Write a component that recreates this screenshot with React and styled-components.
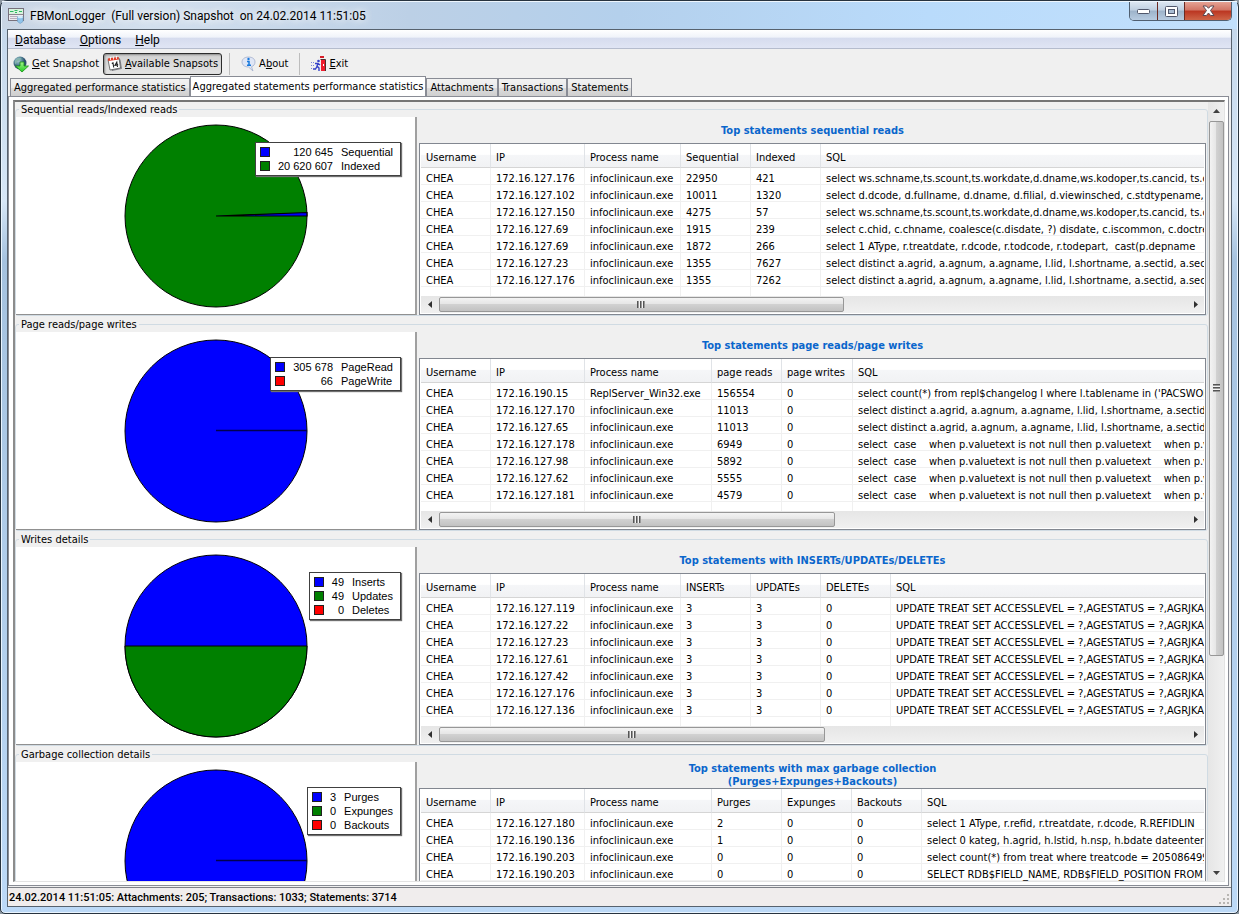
import styled, { createGlobalStyle } from "styled-components";

const groups = [
  {
    legend: "Sequential reads/Indexed reads",
    title: ["Top statements sequential reads"],
    slices: [
      { label: "Sequential", value: "120 645", color: "#0000ff" },
      { label: "Indexed", value: "20 620 607", color: "#008000" },
    ],
    pie: "sequential",
    widths: [70, 94, 96, 70, 70],
    thumb: 406 / 749,
    columns: ["Username", "IP", "Process name", "Sequential", "Indexed", "SQL"],
    rows: [
      ["CHEA", "172.16.127.176", "infoclinicaun.exe", "22950", "421", "select ws.schname,ts.scount,ts.workdate,d.dname,ws.kodoper,ts.cancid, ts.c"],
      ["CHEA", "172.16.127.102", "infoclinicaun.exe", "10011", "1320", "select d.dcode, d.fullname, d.dname, d.filial, d.viewinsched, c.stdtypename, d"],
      ["CHEA", "172.16.127.150", "infoclinicaun.exe", "4275", "57", "select ws.schname,ts.scount,ts.workdate,d.dname,ws.kodoper,ts.cancid, ts.c"],
      ["CHEA", "172.16.127.69", "infoclinicaun.exe", "1915", "239", "select c.chid, c.chname, coalesce(c.disdate, ?) disdate, c.iscommon, c.doctreq"],
      ["CHEA", "172.16.127.69", "infoclinicaun.exe", "1872", "266", "select 1 AType, r.treatdate, r.dcode, r.todcode, r.todepart,  cast(p.depname"],
      ["CHEA", "172.16.127.23", "infoclinicaun.exe", "1355", "7627", "select distinct a.agrid, a.agnum, a.agname, l.lid, l.shortname, a.sectid, a.secti"],
      ["CHEA", "172.16.127.176", "infoclinicaun.exe", "1355", "7262", "select distinct a.agrid, a.agnum, a.agname, l.lid, l.shortname, a.sectid, a.secti"],
    ],
  },
  {
    legend: "Page reads/page writes",
    title: ["Top statements page reads/page writes"],
    slices: [
      { label: "PageRead", value: "305 678", color: "#0000ff" },
      { label: "PageWrite", value: "66", color: "#ff0000" },
    ],
    pie: "full",
    widths: [70, 94, 127, 70, 71],
    thumb: 397 / 749,
    columns: ["Username", "IP", "Process name", "page reads", "page writes", "SQL"],
    rows: [
      ["CHEA", "172.16.190.15", "ReplServer_Win32.exe", "156554", "0", "select count(*) from repl$changelog l where l.tablename in ('PACSWORK"],
      ["CHEA", "172.16.127.170", "infoclinicaun.exe", "11013", "0", "select distinct a.agrid, a.agnum, a.agname, l.lid, l.shortname, a.sectid,"],
      ["CHEA", "172.16.127.65", "infoclinicaun.exe", "11013", "0", "select distinct a.agrid, a.agnum, a.agname, l.lid, l.shortname, a.sectid,"],
      ["CHEA", "172.16.127.178", "infoclinicaun.exe", "6949", "0", "select  case    when p.valuetext is not null then p.valuetext    when p.va"],
      ["CHEA", "172.16.127.98", "infoclinicaun.exe", "5892", "0", "select  case    when p.valuetext is not null then p.valuetext    when p.va"],
      ["CHEA", "172.16.127.62", "infoclinicaun.exe", "5555", "0", "select  case    when p.valuetext is not null then p.valuetext    when p.va"],
      ["CHEA", "172.16.127.181", "infoclinicaun.exe", "4579", "0", "select  case    when p.valuetext is not null then p.valuetext    when p.va"],
    ],
  },
  {
    legend: "Writes details",
    title: ["Top statements with INSERTs/UPDATEs/DELETEs"],
    slices: [
      { label: "Inserts", value: "49", color: "#0000ff" },
      { label: "Updates", value: "49", color: "#008000" },
      { label: "Deletes", value: "0", color: "#ff0000" },
    ],
    pie: "half",
    widths: [70, 94, 96, 70, 70, 70],
    thumb: 387 / 749,
    columns: ["Username", "IP", "Process name", "INSERTs", "UPDATEs", "DELETEs", "SQL"],
    rows: ["119", "22", "23", "61", "42", "176", "136"].map((host) => [
      "CHEA", `172.16.127.${host}`, "infoclinicaun.exe", "3", "3", "0",
      "UPDATE TREAT SET ACCESSLEVEL = ?,AGESTATUS = ?,AGRJKA",
    ]),
  },
  {
    legend: "Garbage collection details",
    title: ["Top statements with max garbage collection", "(Purges+Expunges+Backouts)"],
    slices: [
      { label: "Purges", value: "3", color: "#0000ff" },
      { label: "Expunges", value: "0", color: "#008000" },
      { label: "Backouts", value: "0", color: "#ff0000" },
    ],
    pie: "full",
    widths: [70, 94, 127, 70, 70, 70],
    thumb: 377 / 749,
    columns: ["Username", "IP", "Process name", "Purges", "Expunges", "Backouts", "SQL"],
    rows: [
      ["CHEA", "172.16.127.180", "infoclinicaun.exe", "2", "0", "0", "select 1 AType, r.refid, r.treatdate, r.dcode, R.REFIDLIN"],
      ["CHEA", "172.16.190.136", "infoclinicaun.exe", "1", "0", "0", "select 0 kateg, h.agrid, h.lstid, h.nsp, h.bdate dateenter,"],
      ["CHEA", "172.16.190.203", "infoclinicaun.exe", "0", "0", "0", "select count(*) from treat where treatcode = 2050864996"],
      ["CHEA", "172.16.190.203", "infoclinicaun.exe", "0", "0", "0", "SELECT RDB$FIELD_NAME, RDB$FIELD_POSITION FROM"],
    ],
  },
];

const App = () => {
  return (
    <>
      <GlobalStyle />
      <Window>
        <TitleBar>
          <AppIcon />
          <Title>FBMonLogger&nbsp; (Full version) Snapshot&nbsp; on 24.02.2014 11:51:05</Title>
          <Controls>
            <ControlButton aria-label="Minimize">
              <svg width="13" height="7" viewBox="0 0 13 7">
                <rect x="0.5" y="1.5" width="12" height="4" rx="1" fill="#fff" stroke="#50576b" />
              </svg>
            </ControlButton>
            <ControlButton aria-label="Maximize">
              <svg width="13" height="11" viewBox="0 0 13 11">
                <rect x="0.5" y="0.5" width="12" height="10" rx="1" fill="#fff" stroke="#50576b" />
                <rect x="3.5" y="3.5" width="6" height="4" fill="#a9bdd4" stroke="#50576b" />
              </svg>
            </ControlButton>
            <ControlButton aria-label="Close" $close>
              <svg width="13" height="12" viewBox="0 0 13 12">
                <path
                  d="M1 1h3.4l2.1 2.3L8.600 1H12L8.500 5.500 12 10.500H8.600L6.500 8 4.400 10.500H1l3.500-5z"
                  fill="#fff"
                  stroke="#5b4852"
                />
              </svg>
            </ControlButton>
          </Controls>
        </TitleBar>
        <Client>
          <MenuBar>
            <MenuItem><u>D</u>atabase</MenuItem>
            <MenuItem><u>O</u>ptions</MenuItem>
            <MenuItem><u>H</u>elp</MenuItem>
          </MenuBar>
          <Toolbar>
            <ToolButton><SnapshotIcon /><span><u>G</u>et Snapshot</span></ToolButton>
            <ToolButton $pressed><CalendarIcon /><span><u>A</u>vailable Snapsots</span></ToolButton>
            <Separator />
            <ToolButton><AboutIcon /><span>A<u>b</u>out</span></ToolButton>
            <Separator />
            <ToolButton><ExitIcon /><span><u>E</u>xit</span></ToolButton>
          </Toolbar>
          <TabStrip role="tablist">
            <Tab role="tab">Aggregated performance statistics</Tab>
            <Tab role="tab" aria-selected="true" $active>Aggregated statements performance statistics</Tab>
            <Tab role="tab">Attachments</Tab>
            <Tab role="tab">Transactions</Tab>
            <Tab role="tab">Statements</Tab>
          </TabStrip>
          <TabPanel>
            <ScrollBox>
              <Groups>
                {groups.map((group) => <StatGroup key={group.legend} group={group} />)}
              </Groups>
              <VScroll>
                <ArrowBox><Arrow viewBox="0 0 7 4"><path d="M0 4 3.500 0 7 4z" /></Arrow></ArrowBox>
                <VTrack>
                  <VThumb><Grip /></VThumb>
                </VTrack>
                <ArrowBox><Arrow viewBox="0 0 7 4"><path d="M0 0h7L3.500 4z" /></Arrow></ArrowBox>
              </VScroll>
            </ScrollBox>
          </TabPanel>
          <StatusBar>
            <span>24.02.2014 11:51:05: Attachments: 205; Transactions: 1033; Statements: 3714</span>
            <SizeGrip />
          </StatusBar>
        </Client>
      </Window>
    </>
  );
};

const StatGroup = ({ group }) => {
  return (
    <GroupBox>
      <GroupLegend>{group.legend}</GroupLegend>
      <GroupBody>
        <ChartPanel>
          <Pie kind={group.pie} />
          <ChartLegend>
            {group.slices.map((slice) => (
              <LegendRow key={slice.label}>
                <Swatch $color={slice.color} />
                <LegendValue>{slice.value}</LegendValue>
                <LegendLabel>{slice.label}</LegendLabel>
              </LegendRow>
            ))}
          </ChartLegend>
        </ChartPanel>
        <ListPanel>
          <ListTitle>
            {group.title.map((line) => <span key={line}>{line}</span>)}
          </ListTitle>
          <ListBox>
            <TableClip>
              <Table>
                <colgroup>
                  {group.widths.map((width, i) => <col key={i} style={{ width }} />)}
                  <col />
                </colgroup>
                <thead>
                  <tr>{group.columns.map((name) => <HeadCell key={name}>{name}</HeadCell>)}</tr>
                </thead>
                <tbody>
                  {group.rows.map((row, r) => (
                    <tr key={r}>{row.map((text, c) => <Cell key={c}>{text}</Cell>)}</tr>
                  ))}
                  <tr>{group.columns.map((name) => <Cell key={name} />)}</tr>
                </tbody>
              </Table>
            </TableClip>
            <HScroll>
              <ArrowBox><SideArrow viewBox="0 0 4 7"><path d="M4 0v7L0 3.500z" /></SideArrow></ArrowBox>
              <HTrack>
                <HThumb style={{ width: `${group.thumb * 100}%` }}><Grip $upright /></HThumb>
              </HTrack>
              <ArrowBox><SideArrow viewBox="0 0 4 7"><path d="M0 0l4 3.500L0 7z" /></SideArrow></ArrowBox>
            </HScroll>
          </ListBox>
        </ListPanel>
      </GroupBody>
    </GroupBox>
  );
};

const Pie = ({ kind }) => (
  <svg width="184" height="184" viewBox="0 0 184 184">
    <circle cx="92" cy="92" r="91" fill={kind === "sequential" ? "#008000" : "#0000ff"} stroke="#000" />
    {kind === "sequential" && (
      <path d="M92 92 183 88.500V92z" fill="#0000ff" stroke="#000" strokeWidth="1.2" />
    )}
    {kind === "half" && <path d="M1 92a91 91 0 0 0 182 0z" fill="#008000" stroke="#000" />}
    {kind === "full" && <path d="M92 91.500h91" stroke="#000050" strokeWidth="1.500" />}
  </svg>
);

const AppIcon = () => (
  <svg width="16" height="16" viewBox="0 0 16 16">
    <rect x="0.5" y="0.5" width="15" height="12" fill="#ecebf0" stroke="#77717c" />
    <rect x="1" y="1" width="14" height="5" fill="#d9f3de" />
    <path d="M2 3.500h3.500M6.500 2.500h3M7 4.500h2M11 3.500h3" stroke="#2fba62" />
    <path d="M1 6.500h14" stroke="#8c8590" />
    <path d="M2 8.500h7M2 10.500h7" stroke="#b9aebb" />
    <path d="M9.500 8.500h5.500v5l-2.800 2-2.700-2z" fill="#8fc3ea" stroke="#6a98c0" strokeWidth="0.6" />
    <ellipse cx="12.300" cy="9" rx="2.700" ry="1.200" fill="#d3ebfa" />
  </svg>
);

const SnapshotIcon = () => (
  <svg width="17" height="17" viewBox="0 0 17 17">
    <defs>
      <radialGradient id="globe" cx="35%" cy="30%">
        <stop offset="0" stopColor="#b3cfd6" />
        <stop offset="0.6" stopColor="#5b8d9c" />
        <stop offset="1" stopColor="#2f5170" />
      </radialGradient>
      <linearGradient id="down" x1="0" y1="0" x2="0" y2="1">
        <stop offset="0" stopColor="#a4f38b" />
        <stop offset="1" stopColor="#22cc22" />
      </linearGradient>
    </defs>
    <circle cx="7" cy="7" r="6.500" fill="url(#globe)" />
    <path d="M2 5c2-3 4-3 6-3-1 2-1 3-3 3S4 8 2 8z" fill="#86b5ad" />
    <path d="M7 6h4v4h4.500L9 16 2.500 10H7z" fill="url(#down)" stroke="#159015" strokeWidth="0.8" />
  </svg>
);

const CalendarIcon = () => (
  <svg width="16" height="16" viewBox="0 0 16 16">
    <path d="M2.500 5.500 13 3.500l1.500 9-9.500 2z" fill="#b7b7bd" stroke="#4f4f58" strokeWidth="0.6" />
    <path d="M1 3.500 12 2 13.500 12 3 14z" fill="#fff" stroke="#555" strokeWidth="0.8" />
    <path d="M0.800 2.500 11.500 1l.5 2.500L1.300 5z" fill="#e33d29" />
    <path d="M3.500 1v3M6.500 0.600v3M9.500 0v3" stroke="#fff" strokeWidth="0.8" />
    <path d="M4.800 7.500 6 6.800 6.700 11.500M10.500 11 9.800 6.200 8 9.300 11.200 8.900" fill="none" stroke="#222" strokeWidth="1.1" />
  </svg>
);

const AboutIcon = () => (
  <svg width="16" height="16" viewBox="0 0 16 16">
    <path
      d="M7.500 1c4 0 6.500 2 6.500 5 0 2.300-1.300 4-3.500 4.700L12 15l-4.500-4C3.500 11 1 8.800 1 6s2.500-5 6.500-5z"
      fill="#dfe6f6"
      stroke="#a3aecb"
      strokeWidth="0.8"
    />
    <circle cx="7.500" cy="3" r="1.200" fill="#1678dc" />
    <path d="M6 5.500h2v3.500M6 9.200h4" fill="none" stroke="#1678dc" strokeWidth="1.500" />
  </svg>
);

const ExitIcon = () => (
  <svg width="16" height="16" viewBox="0 0 16 16">
    <rect x="9" y="0" width="4" height="2" fill="#d81e28" />
    <path d="M10 4h4v11h-4z" fill="#ef1c2c" />
    <path d="M9.500 3.500h5V15" fill="none" stroke="#49302f" />
    <rect x="12" y="8" width="1" height="2" fill="#fff" />
    <circle cx="7.500" cy="5" r="1.300" fill="#3642c8" />
    <path d="M4 7.500h3l2 1.500M7 7.500 6 10l2 2v3M6 10.500 4.500 13H2" fill="none" stroke="#3642c8" strokeWidth="1.400" />
    <path d="M0 6.500h3M0 9.500h4M0 12.500h2" stroke="#7983dc" strokeDasharray="1 1" />
  </svg>
);

const SizeGrip = () => (
  <svg width="12" height="12" viewBox="0 0 12 12" fill="#b8b5b2">
    <path d="M8 0h2v2H8zM8 4h2v2H8zM8 8h2v2H8zM4 4h2v2H4zM4 8h2v2H4zM0 8h2v2H0z" />
  </svg>
);

const GlobalStyle = createGlobalStyle`
* {
  box-sizing: border-box;
}
body {
  margin: 0;
  background: #8d97a1;
  color: #000;
  font-family: "DejaVu Sans Condensed", Tahoma, sans-serif;
  font-size: 11px;
  line-height: 14px;
  overflow: hidden;
}
button {
  font: inherit;
  color: inherit;
  border: 0;
  padding: 0;
  background: none;
  white-space: nowrap;
}
svg {
  display: block;
  flex: none;
}
`;

const Window = styled.div`
  display: flex;
  flex-direction: column;
  height: 100vh;
  padding: 0 6px 6px;
  border: 1px solid #27333f;
  border-radius: 7px 7px 5px 5px;
  background: linear-gradient(#c3d6ea 0, #d6e6f6 200px, #a5c2df 260px, #bcd9f7 100%);
  box-shadow: inset 0 0 0 1px #e9f4fe;
`;

const TitleBar = styled.header`
  display: flex;
  align-items: center;
  flex: none;
  height: 28px;
  margin: 0 -5px;
  padding: 0 5px 0 6px;
  border-top: 1px solid #eef6fd;
  background: linear-gradient(90deg, #c8d5e4 0, #d3e0ee 12%, #bcd0e6 33%, #b4d0ec 50%, #b9dbfb 75%, #c2e0fc 100%);
`;

const Title = styled.h1`
  flex: 1;
  margin: 0 0 0 6px;
  font-family: Roboto, "Segoe UI", sans-serif;
  font-size: 12px;
  font-weight: normal;
  line-height: 16px;
  text-shadow: 0 0 8px #fff, 0 0 8px #fff;
`;

const Controls = styled.div`
  display: flex;
  align-self: flex-start;
  height: 19px;
  border: 1px solid #505f70;
  border-top: 0;
  border-radius: 0 0 5px 5px;
  overflow: hidden;
`;

const ControlButton = styled.button`
  display: grid;
  place-items: center;
  width: ${(p) => (p.$close ? 47 : 27)}px;
  background: ${(p) =>
    p.$close
      ? "linear-gradient(#e5a294 0, #d27565 45%, #bb3521 50%, #ce6548 100%)"
      : "linear-gradient(#dce7f2 0, #bfcfe0 45%, #9db3ca 50%, #b7cbe0 100%)"};

  & + & {
    border-left: 1px solid ${(p) => (p.$close ? "#6b2a22" : "#66778a")};
  }
`;

const Client = styled.div`
  display: flex;
  flex-direction: column;
  flex: 1;
  min-height: 0;
  border: 1px solid #57626e;
  background: #f0f0f0;
`;

const MenuBar = styled.nav`
  display: flex;
  flex: none;
  height: 19px;
  border-bottom: 1px solid #b5bccd;
  background: linear-gradient(#fff 0, #f0f3fa 40%, #d6dcee 45%, #e0e5f4 100%);
`;

const MenuItem = styled.button`
  padding: 2px 7px 0;
  font-family: Roboto, "Segoe UI", sans-serif;
  font-size: 12px;
`;

const Toolbar = styled.div`
  display: flex;
  align-items: center;
  flex: none;
  height: 27px;
  padding: 2px 0 0 1px;
`;

const ToolButton = styled.button`
  display: flex;
  align-items: center;
  gap: 2px;
  height: 22px;
  padding: 1px 3px 0;
  border: 1px solid ${(p) => (p.$pressed ? "#2c2c2c" : "transparent")};
  border-radius: 3px;
  background: ${(p) => (p.$pressed ? "linear-gradient(#d2d2d2, #e3e3e3)" : "none")};
  box-shadow: ${(p) => (p.$pressed ? "inset 1px 1px 2px #8a8a8a" : "none")};
`;

const Separator = styled.div`
  width: 1px;
  height: 22px;
  margin: 0 7px;
  background: #bdbdbd;
`;

const TabStrip = styled.div`
  display: flex;
  align-items: flex-end;
  flex: none;
  height: 20px;
  padding-left: 2px;
`;

const Tab = styled.button`
  height: ${(p) => (p.$active ? 21 : 18)}px;
  padding: ${(p) => (p.$active ? "0 2px" : "1px 3px 0")};
  margin-bottom: ${(p) => (p.$active ? -1 : 0)}px;
  border: 1px solid #898c95;
  border-bottom: 0;
  background: ${(p) => (p.$active ? "#fff" : "linear-gradient(#f2f2f2 0, #ebebeb 50%, #dddddd 50%, #cfcfcf 100%)")};

  & + & {
    border-left-width: ${(p) => (p.$active ? 1 : 2)}px;
  }
`;

const TabPanel = styled.main`
  display: flex;
  flex: 1;
  min-height: 0;
  margin-right: 2px;
  padding: 3px 3px 3px 4px;
  border: 1px solid #898c95;
  background: #fff;
`;

const ScrollBox = styled.div`
  display: flex;
  flex: 1;
  min-width: 0;
  border: 1px solid #e3e3e3;
  border-top: 2px solid #757575;
  border-left: 2px solid #8c8c8c;
  background: #f0f0f0;
`;

const Groups = styled.div`
  flex: 1;
  min-width: 0;
  overflow: hidden;
`;

const GroupBox = styled.fieldset`
  min-width: 0;
  margin: 0 0 1px;
  padding: 0;
  border: 1px solid #d0dbe3;
  border-radius: 3px;
`;

const GroupLegend = styled.legend`
  height: 15px;
  margin-left: 3px;
  padding: 1px 2px 0;
`;

const GroupBody = styled.div`
  display: grid;
  grid-template-columns: 401px minmax(0, 1fr);
  grid-template-rows: minmax(0, 1fr);
  gap: 2px;
  height: 198px;
  padding-right: 1px;
`;

const ChartPanel = styled.div`
  position: relative;
  display: grid;
  place-items: center;
  border-right: 2px solid #a0a0a0;
  border-bottom: 1px solid #909090;
  background: #fff;
`;

const ChartLegend = styled.ul`
  position: absolute;
  top: 25px;
  right: 14px;
  display: grid;
  grid-template-columns: auto auto auto;
  column-gap: 8px;
  margin: 0;
  padding: 2px 7px 2px 4px;
  border: 1px solid #404040;
  background: #fff;
  box-shadow: 1px 1px 1px #707070;
  font-family: "Liberation Sans", Arial, sans-serif;
  list-style: none;
`;

const LegendRow = styled.li`
  display: grid;
  grid-column: 1 / -1;
  grid-template-columns: subgrid;
  align-items: center;
`;

const Swatch = styled.span`
  width: 10px;
  height: 10px;
  border: 1px solid #202020;
  background: ${(p) => p.$color};
`;

const LegendValue = styled.span`
  text-align: right;
`;

const LegendLabel = styled.span`
  white-space: nowrap;
`;

const ListPanel = styled.section`
  display: flex;
  flex-direction: column;
  min-width: 0;
`;

const ListTitle = styled.h2`
  display: flex;
  flex-direction: column;
  align-items: center;
  justify-content: center;
  flex: none;
  height: 26px;
  margin: 0;
  color: #0a66cc;
  font-size: 11px;
  line-height: 13px;
`;

const ListBox = styled.div`
  display: flex;
  flex-direction: column;
  flex: 1;
  min-height: 0;
  padding: 0 1px 1px;
  border: 1px solid #828790;
  background: #fff;
`;

const TableClip = styled.div`
  flex: 1;
  min-height: 0;
  overflow: hidden;
`;

const Table = styled.table`
  width: 100%;
  table-layout: fixed;
  border-collapse: separate;
  border-spacing: 0;
`;

const HeadCell = styled.th`
  height: 24px;
  padding: 4px 0 0 5px;
  border-right: 1px solid #e0e3e7;
  border-bottom: 1px solid #d5d5d5;
  background: linear-gradient(#fff 0, #fff 45%, #f5f6f8 50%, #f1f2f4 100%);
  font-weight: normal;
  text-align: left;
  white-space: nowrap;

  &:last-child {
    border-right: 0;
  }
`;

const Cell = styled.td`
  height: 17px;
  padding: 5px 0 0 5px;
  border-right: 1px solid #f0f0f0;
  border-bottom: 1px solid #f0f0f0;
  line-height: 11px;
  white-space: pre;

  &:last-child {
    border-right: 0;
  }
`;

const ArrowBox = styled.div`
  display: grid;
  place-items: center;
  flex: none;
  width: 17px;
  height: 17px;
`;

const Arrow = styled.svg`
  width: 7px;
  height: 4px;
  fill: #404040;
`;

const SideArrow = styled.svg`
  width: 4px;
  height: 7px;
  fill: #303030;
`;

const HScroll = styled.div`
  display: flex;
  flex: none;
  height: 17px;
  background: linear-gradient(#e6e6e6, #f0f0f0);
`;

const HTrack = styled.div`
  flex: 1;
  padding: 1px;
`;

const HThumb = styled.div`
  display: grid;
  place-items: center;
  height: 15px;
  border: 1px solid #979797;
  border-radius: 2px;
  background: linear-gradient(#f3f3f3 0, #e6e6e6 45%, #d1d1d1 50%, #c2c2c2 100%);
`;

const VScroll = styled.div`
  display: flex;
  flex-direction: column;
  align-items: center;
  flex: none;
  width: 16px;
  background: linear-gradient(90deg, #e6e6e6, #f0f0f0);
`;

const VTrack = styled.div`
  flex: 1;
  width: 15px;
  padding-top: 2px;
`;

const VThumb = styled.div`
  display: grid;
  place-items: center;
  height: 72%;
  border: 1px solid #979797;
  border-radius: 2px;
  background: linear-gradient(90deg, #f3f3f3 0, #e6e6e6 45%, #d1d1d1 50%, #c2c2c2 100%);
`;

const Grip = styled.div`
  width: ${(p) => (p.$upright ? 8 : 7)}px;
  height: ${(p) => (p.$upright ? 7 : 8)}px;
  background: repeating-linear-gradient(
    ${(p) => (p.$upright ? "90deg" : "180deg")},
    #555 0, #555 1px, #999 1px, #999 2px, #f4f4f4 2px, #f4f4f4 3px
  );
`;

const StatusBar = styled.footer`
  display: flex;
  align-items: center;
  justify-content: space-between;
  flex: none;
  height: 19px;
  margin-top: 1px;
  padding: 2px 0 0 1px;
  border-top: 1px solid #7d8087;
  background: #f0eded;
  font-family: Roboto, "Segoe UI", sans-serif;
  font-weight: 500;

  svg {
    align-self: flex-end;
  }
`;

export default App;
